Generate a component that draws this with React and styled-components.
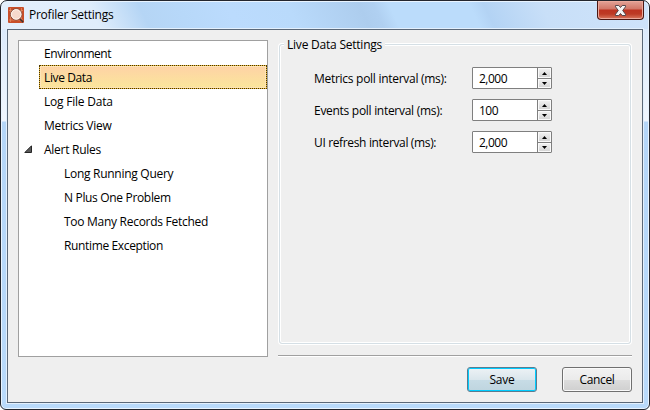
import React from "react";
import styled, { createGlobalStyle } from "styled-components";

const Global = createGlobalStyle`
  * { box-sizing: border-box; }
  body { margin: 0; background: #fff; overflow: hidden; }
`;

const Window = styled.div`
  width: 650px;
  height: 410px;
  display: flex;
  flex-direction: column;
  padding: 0 6px 6px;
  border: 1px solid #23262e;
  border-radius: 7px 7px 6px 6px;
  box-shadow: inset 0 0 0 1px #e9f4ff;
  background:
    linear-gradient(65deg, #e4effc 0, #dfedfc 90px, #b5d5f5 135px, #b7d8f9 170px, #bbdbfd 215px, #b9dafb 270px, #adcdee 335px, #b0d0f1 348px, #bbdcfb 362px, #bbdcfb 435px, #b3d3f4 448px, #c8dff8 500px, #cfe3fa 100%) 0 0 / 100% 28px no-repeat,
    linear-gradient(#dceafb 0, #f0f6fe 92px, #b5d6f8 93px, #b9dafb 100%) 0 28px / 100% 380px no-repeat;
  font-family: "Open Sans", "Noto Sans", sans-serif;
  font-size: 12px;
  color: #000;
`;

const TitleBar = styled.header`
  height: 28px;
  flex: none;
  display: flex;
  align-items: flex-start;
`;

const AppIcon = styled.svg`
  width: 16px;
  height: 16px;
  margin: 6px 5px 0 1px;
`;

const Label = styled.span`
  white-space: nowrap;
  letter-spacing: ${(p) => p.$track || 0}px;
`;

const Title = styled.h1`
  margin: 0;
  flex: 1;
  font: inherit;
  line-height: 28px;
`;

const CloseButton = styled.button`
  width: 47px;
  height: 19px;
  margin-right: -1px;
  padding: 0;
  display: flex;
  align-items: center;
  justify-content: center;
  border: 1px solid #4a1713;
  border-top: 0;
  border-radius: 0 0 4px 4px;
  box-shadow: inset 0 0 0 1px #eba99c;
  background: linear-gradient(#e3a398 0, #d17667 8px, #bd3321 9px, #bd3a25 13px, #d9785f 100%);
`;

const Client = styled.main`
  flex: 1;
  min-height: 0;
  display: grid;
  grid-template-columns: 250px 354px;
  column-gap: 10px;
  padding: 10px 0 0 10px;
  border: 1px solid #5b6878;
  background: #efefef;
  box-shadow: 0 0 0 1px #e3f0fd;
`;

const Tree = styled.nav`
  height: 317px;
  border: 1px solid #a0a0a0;
  background: #fff;
`;

const TreeRow = styled.div`
  height: 24px;
  margin-left: 20px;
  padding-left: ${(p) => (p.$nested ? 24 : 4)}px;
  display: flex;
  align-items: center;
  border: 1px ${(p) => (p.$selected ? "dotted #4a3500" : "solid transparent")};
  background: ${(p) => (p.$selected ? "linear-gradient(#fed2a6, #fbe69b) padding-box, linear-gradient(#e8b93c, #e8b93c) border-box" : "none")};
  box-shadow: ${(p) => (p.$selected ? "inset 0 0 0 1px #fee5b7" : "none")};
`;

const Expander = styled.svg`
  width: 8px;
  height: 8px;
  margin: 0 12px 0 -20px;
`;

const Side = styled.section`
  display: flex;
  flex-direction: column;
`;

const Group = styled.div`
  position: relative;
  height: 304px;
  padding: 27px 0 0 36px;
  display: flex;
  flex-direction: column;
  gap: 10px;
`;

const Frame = styled.div`
  position: absolute;
  inset: 4px 1px 0;
  border: 1px solid #d5dfe5;
  border-radius: 3px;
  box-shadow: 0 0 0 1px #fff, inset 0 0 0 1px #fff;
`;

const Legend = styled.div`
  position: absolute;
  left: 6px;
  top: -3px;
  padding: 0 3px;
  line-height: 16px;
  background: #efefef;
`;

const Field = styled.label`
  height: 22px;
  position: relative;
  display: grid;
  grid-template-columns: 158px 80px;
  align-items: center;
`;

const Spinner = styled.div`
  width: 80px;
  height: 22px;
  display: grid;
  grid-template-columns: 1fr 14px;
  border: 1px solid #7f7f7f;
  border-radius: 1px;
  background: #fff;
`;

const Value = styled.div`
  padding-left: 6px;
  line-height: 21px;
`;

const Steps = styled.div`
  display: grid;
  grid-template-rows: 10px 10px;
  border-left: 1px solid #7f7f7f;
`;

const Step = styled.span`
  display: flex;
  align-items: center;
  justify-content: center;
  border-top: ${(p) => (p.$down ? "1px solid #7f7f7f" : "0")};
  box-shadow: inset 0 0 0 1px #fafafa;
  background: linear-gradient(#f3f3f3, #d2d2d2);
`;

const Divider = styled.hr`
  width: 354px;
  height: 2px;
  margin: 11px 0 10px;
  border: 0;
  border-top: 1px solid #a0a0a0;
  border-bottom: 1px solid #fff;
`;

const Actions = styled.footer`
  display: flex;
  justify-content: flex-end;
  gap: 25px;
`;

const Button = styled.button`
  width: 70px;
  height: 25px;
  padding: 0;
  border: 1px solid ${(p) => (p.$primary ? "#5a7c90" : "#707070")};
  border-radius: 3px;
  font: inherit;
  color: #000;
  box-shadow: inset 0 0 0 ${(p) => (p.$primary ? "1px #00ccff" : "1px #fafafa")};
  background: ${(p) =>
    p.$primary
      ? "linear-gradient(#edf2f5 0, #dae6ec 50%, #c7dce6 51%, #bfd5df 100%)"
      : "linear-gradient(#f2f2f2 0, #ebebeb 50%, #dddddd 51%, #cfcfcf 100%)"};
`;

const items = [
  { text: "Environment", track: -0.45 },
  { text: "Live Data", selected: true, track: -0.38 },
  { text: "Log File Data", track: -0.22 },
  { text: "Metrics View", track: -0.25 },
  { text: "Alert Rules", open: true, track: -0.27 },
  { text: "Long Running Query", nested: true, track: -0.28 },
  { text: "N Plus One Problem", nested: true, track: -0.33 },
  { text: "Too Many Records Fetched", nested: true, track: -0.28 },
  { text: "Runtime Exception", nested: true, track: -0.36 },
];

const fields = [
  { text: "Metrics poll interval (ms):", value: "2,000", track: -0.28 },
  { text: "Events poll interval (ms):", value: "100", track: -0.29 },
  { text: "UI refresh interval (ms):", value: "2,000", track: -0.35 },
];

const Arrow = ({ down }) => (
  <svg width="5" height="3" viewBox="0 0 5 3">
    <path d={down ? "M0 0h5L2.5 3z" : "M0 3h5L2.5 0z"} fill="#000" />
  </svg>
);

export default function App() {
  return (
    <>
      <Global />
      <Window>
        <TitleBar>
          <AppIcon viewBox="0 0 16 16">
            <rect width="16" height="16" rx="1" fill="#c94f2a" />
            <path d="M1 3.5h14M1 13h14M2.5 1v14M13.5 1v14" stroke="#e28a62" strokeWidth=".8" />
            <path d="M11.5 11.5l3.6 3.6" stroke="#43302c" strokeWidth="1.6" />
            <circle cx="8.2" cy="7.4" r="5.7" fill="#f6d9cc" stroke="#85493a" />
            <circle cx="8.2" cy="7.4" r="4.8" fill="none" stroke="#fff5ec" />
          </AppIcon>
          <Title><Label $track={-0.25}>Profiler Settings</Label></Title>
          <CloseButton aria-label="Close">
            <svg width="13" height="11" viewBox="0 0 13 11">
              <path d="M1.5 .5h3.3l1.7 2 1.7-2h3.3v1.3L8.7 5.5l2.8 3.7v1.3H8.2l-1.7-2-1.7 2H1.5V9.2l2.8-3.7-2.8-3.7z" fill="#f5f5f5" stroke="#54464b" />
            </svg>
          </CloseButton>
        </TitleBar>
        <Client>
          <Tree>
            {items.map((i) => (
              <TreeRow key={i.text} $nested={i.nested} $selected={i.selected}>
                {i.open && (
                  <Expander viewBox="0 0 8 8">
                    <path d="M7.5 .8v6.7H.8z" fill="#595959" stroke="#262626" />
                  </Expander>
                )}
                <Label $track={i.track}>{i.text}</Label>
              </TreeRow>
            ))}
          </Tree>
          <Side>
            <Group>
              <Frame />
              <Legend><Label $track={-0.22}>Live Data Settings</Label></Legend>
              {fields.map((f) => (
                <Field key={f.text}>
                  <Label $track={f.track}>{f.text}</Label>
                  <Spinner>
                    <Value><Label $track={-0.5}>{f.value}</Label></Value>
                    <Steps>
                      <Step><Arrow /></Step>
                      <Step $down><Arrow down /></Step>
                    </Steps>
                  </Spinner>
                </Field>
              ))}
            </Group>
            <Divider />
            <Actions>
              <Button $primary><Label $track={-0.2}>Save</Label></Button>
              <Button><Label $track={-0.35}>Cancel</Label></Button>
            </Actions>
          </Side>
        </Client>
      </Window>
    </>
  );
}
